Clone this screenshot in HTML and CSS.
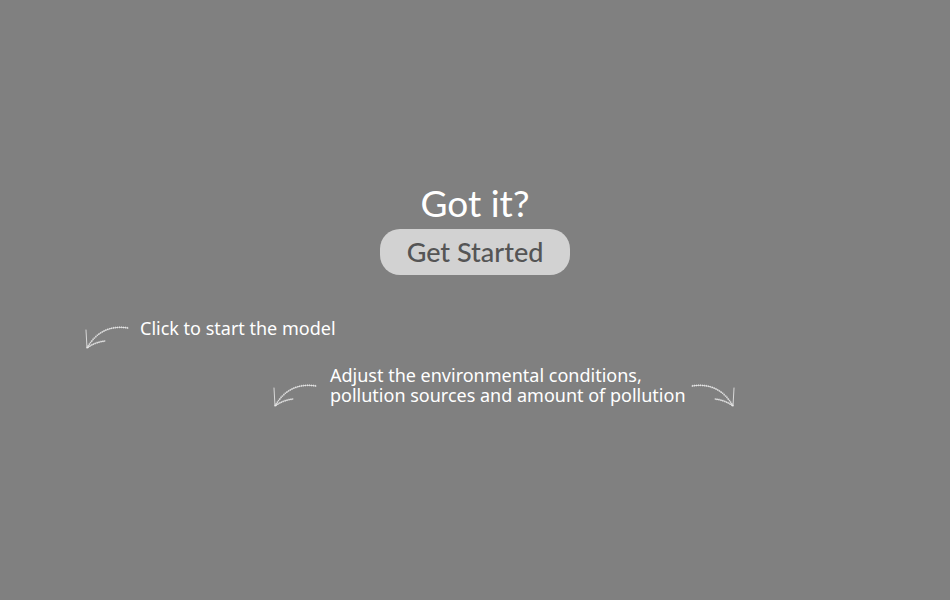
FILE: index.html
```html
<!DOCTYPE html>
<html lang="en">
<head>
<meta charset="utf-8">
<meta name="viewport" content="width=device-width, initial-scale=1">
<title>Get Started</title>
<link rel="stylesheet" href="styles.css">
</head>
<body>
<svg class="defs" aria-hidden="true">
  <symbol id="arrow" viewBox="0 0 46 25">
    <path d="M43 3C25 0 11 7 2 23"/>
    <path d="M1 5L2 23Q10 17 20 16"/>
    <path class="chalk" d="M43 3C25 0 11 7 2 23Q10 17 20 16"/>
  </symbol>
</svg>
<main class="intro">
  <h1 class="title">Got it?</h1>
  <button class="start" type="button">Get Started</button>
  <section class="hints">
    <div class="hint hint-model">
      <svg class="arrow" aria-hidden="true"><use href="#arrow"/></svg>
      <p>Click to start the model</p>
    </div>
    <div class="hint hint-conditions">
      <svg class="arrow" aria-hidden="true"><use href="#arrow"/></svg>
      <p>Adjust the environmental conditions,<br>pollution sources and amount of pollution</p>
      <svg class="arrow arrow-right" aria-hidden="true"><use href="#arrow"/></svg>
    </div>
  </section>
</main>
</body>
</html>
```
FILE: styles.css
```css
body {
  margin: 0;
  min-height: 100vh;
  background: #808080;
  color: #fff;
  font-family: "Noto Sans", "Open Sans", sans-serif;
}

.defs {
  position: absolute;
  width: 0;
  height: 0;
}

.intro {
  display: flex;
  flex-direction: column;
  align-items: center;
  padding-top: 180px;
}

.title {
  margin: 0;
  padding-bottom: 3px;
  font: 400 37px/46px Lato, sans-serif;
}

.start {
  padding: 0 27px;
  border: 0;
  border-radius: 20px;
  background: #d2d2d2;
  color: #555;
  font: 500 27px/46px Lato, sans-serif;
  cursor: pointer;
}

.hints {
  display: flex;
  flex-direction: column;
  align-items: flex-start;
  gap: 15px;
  width: 100%;
  max-width: 950px;
  margin-top: 43px;
}

.hint {
  display: flex;
  font-size: 18px;
  line-height: 20px;
}

.hint p {
  margin: 0;
}

.hint-model {
  gap: 9px;
  padding-left: 85px;
}

.hint-conditions {
  gap: 11px;
  padding-left: 273px;
}

.arrow {
  flex: none;
  width: 46px;
  height: 25px;
  margin-top: 7px;
  fill: none;
  stroke: #d8d8d8;
  stroke-width: 1;
  stroke-linecap: round;
}

.hint-conditions .arrow {
  margin-top: 18px;
}

.chalk {
  stroke: #f4f4f4;
  stroke-width: 2;
  stroke-dasharray: 1 1;
  stroke-linecap: butt;
  opacity: 0.6;
}

.arrow-right {
  margin-left: -8px;
  transform: scaleX(-1);
}
```
